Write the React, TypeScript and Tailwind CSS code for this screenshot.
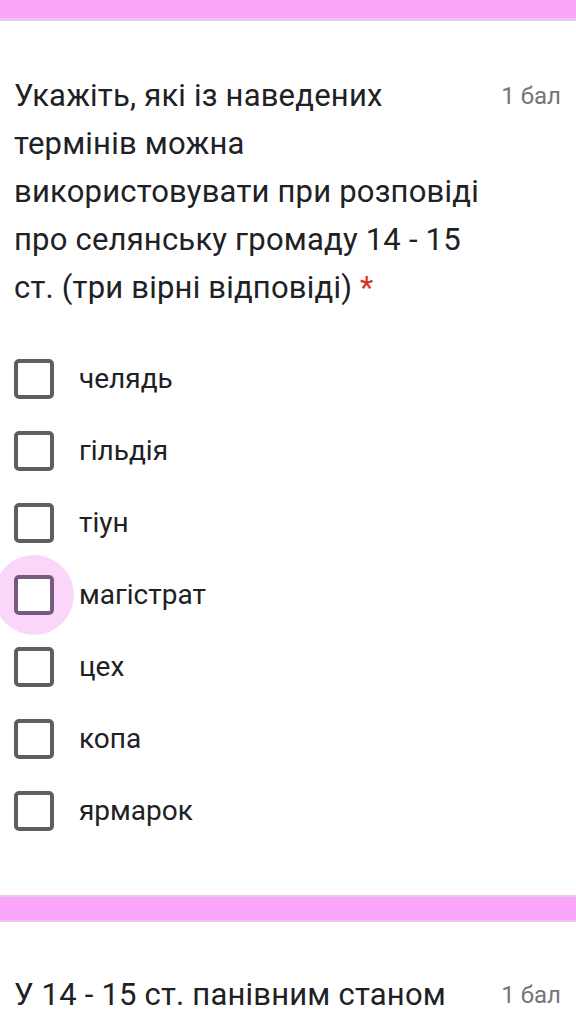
import { useState } from "react"

const options = ["челядь", "гільдія", "тіун", "магістрат", "цех", "копа", "ярмарок"]

const questionLines = [
  "Укажіть, які із наведених",
  "термінів можна",
  "використовувати при розповіді",
  "про селянську громаду 14 - 15",
]

function Checkbox({ focused }: { focused?: boolean }) {
  return (
    <div className="relative w-10 h-10 flex items-center justify-center shrink-0">
      {focused && <div className="absolute -inset-5 rounded-full bg-[#fbd6fb]" />}
      <div
        className={`relative w-10 h-10 rounded-[5px] border-4 ${
          focused ? "border-[#775a80]" : "border-[#5f5f5f]"
        } bg-white`}
      />
    </div>
  )
}

export default function App() {
  const [focused] = useState(3)

  return (
    <div className="w-[576px] h-[1024px] overflow-hidden bg-white font-['Roboto',sans-serif] text-[#202124]">
      <div className="h-[18px] bg-[#f9a6fb]" />
      <div className="h-[3px] bg-[#eac6eb]" />

      <div className="pl-[14px] pr-[15px] pt-[51px]">
        <div className="flex items-start justify-between">
          <h2 className="text-[31px] leading-[48px] tracking-[0.2px] whitespace-nowrap">
            {questionLines.map((l) => (
              <span key={l} className="block">
                {l}
              </span>
            ))}
            <span className="block">
              ст. (три вірні відповіді) <span className="text-[#d93025]">*</span>
            </span>
          </h2>
          <span className="text-[24px] leading-[48px] text-[#757575] whitespace-nowrap">1 бал</span>
        </div>

        <div className="mt-[31px] flex flex-col">
          {options.map((o, i) => (
            <div key={o} className="h-[72px] flex items-center gap-[25px]">
              <Checkbox focused={i === focused} />
              <span className="text-[28px]">{o}</span>
            </div>
          ))}
        </div>
      </div>

      <div className="mt-[48px] h-[2px] bg-[#eac6eb]" />
      <div className="h-[23px] bg-[#f9a6fb]" />
      <div className="h-[2px] bg-[#eac6eb]" />

      <div className="pl-[14px] pr-[15px] pt-[49px] flex items-start justify-between">
        <h2 className="text-[31px] leading-[48px] tracking-[0.2px] whitespace-nowrap">У 14 - 15 ст. панівним станом</h2>
        <span className="text-[24px] leading-[48px] text-[#757575] whitespace-nowrap">1 бал</span>
      </div>
    </div>
  )
}
